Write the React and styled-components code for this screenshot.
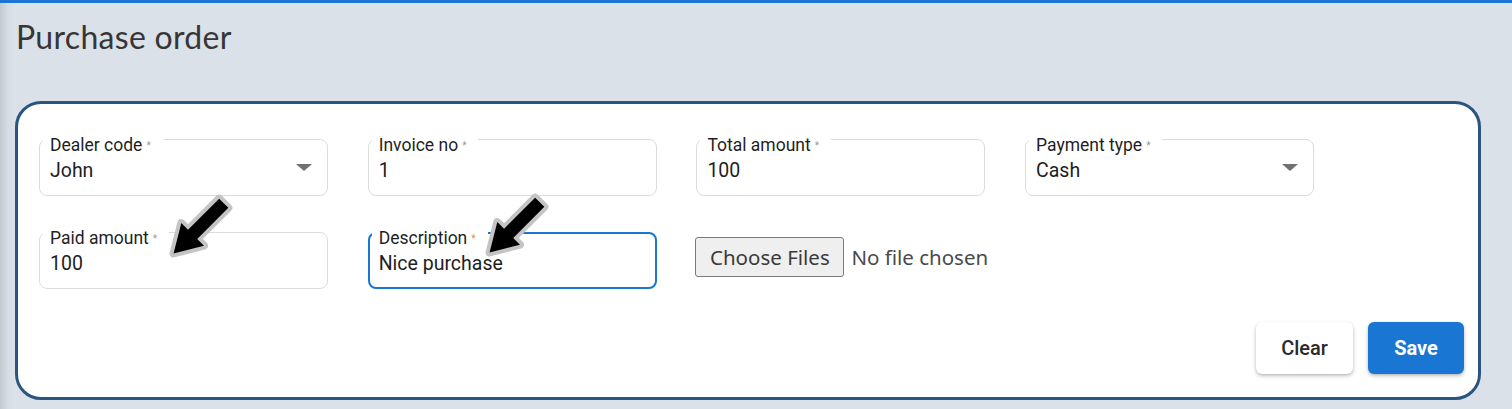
import React from 'react'
import styled, { createGlobalStyle } from 'styled-components'

const GlobalStyle = createGlobalStyle`
  html, body {
    margin: 0;
    padding: 0;
  }

  body {
    background: linear-gradient(to right, #c3c9d1 0px, #d6dce3 8px, #dbe1e8 14px) #dbe1e8;
    font-family: Roboto, "Liberation Sans", sans-serif;
    height: 409px;
    overflow: hidden;
  }
`

const fields = [
  { id: 'dealer', label: 'Dealer code', value: 'John', select: true },
  { id: 'invoice', label: 'Invoice no', value: '1' },
  { id: 'total', label: 'Total amount', value: '100' },
  { id: 'payment', label: 'Payment type', value: 'Cash', select: true },
  { id: 'paid', label: 'Paid amount', value: '100', arrow: { left: 117, top: -47 } },
  { id: 'desc', label: 'Description', value: 'Nice purchase', focused: true, arrow: { left: 103, top: -49 } }
]

const Arrow = ({ left, top }) => (
  <ArrowSvg width="84" height="84" viewBox="0 0 84 84" style={{ left, top }}>
    <g transform="translate(42 42) rotate(135)">
      <polygon
        points="-35,-6.5 9,-6.5 9,-16 36,0 9,16 9,6.5 -35,6.5"
        fill="#000"
        stroke="#c4c4c4"
        strokeWidth="8"
        strokeLinejoin="round"
        paintOrder="stroke"
      />
    </g>
  </ArrowSvg>
)

const App = () => (
  <Page>
    <GlobalStyle />
    <TopBar />
    <Header>
      <Title>Purchase order</Title>
    </Header>
    <Card>
      <Grid>
        {fields.map(field =>
          <Field key={field.id} focused={field.focused}>
            <Label focused={field.focused}>
              {field.label}
              <Required focused={field.focused}>*</Required>
            </Label>
            <Value>{field.value}</Value>
            {field.select && <Caret />}
            {field.arrow && <Arrow {...field.arrow} />}
          </Field>
        )}
        <FilePicker>
          <FileButton>Choose Files</FileButton>
          <FileText>No file chosen</FileText>
        </FilePicker>
      </Grid>
      <Actions>
        <Button>Clear</Button>
        <Button primary>Save</Button>
      </Actions>
    </Card>
  </Page>
)

const Page = styled.div`
  width: 1512px;
  height: 409px;
`

const TopBar = styled.div`
  height: 3px;
  background: #1976d2;
`

const Header = styled.div`
  height: 98px;
  padding-left: 16px;
  box-sizing: border-box;
`

const Title = styled.h1`
  margin: 0;
  padding-top: 13px;
  font-family: Lato, "Noto Sans", sans-serif;
  font-size: 32px;
  font-weight: 400;
  line-height: 42px;
  color: #363636;
  letter-spacing: 0.3px;
`

const Card = styled.div`
  margin-left: 15px;
  width: 1466px;
  height: 299px;
  box-sizing: border-box;
  border: 3px solid #2a5581;
  border-radius: 26px;
  background: #fff;
  padding: 35px 14px 23px 21px;
  display: flex;
  flex-direction: column;
`

const Grid = styled.div`
  display: grid;
  grid-template-columns: repeat(4, 289px);
  column-gap: 39.7px;
  row-gap: 36px;
`

const Field = styled.div`
  position: relative;
  height: 57px;
  box-sizing: border-box;
  border: ${props => props.focused ? '2px solid #1976d2' : '1px solid #dcdcdc'};
  border-radius: 8px;
  padding: ${props => props.focused ? '18px 14px 0 9px' : '19px 15px 0 10px'};
  display: flex;
  justify-content: space-between;
  align-items: flex-start;
`

const Label = styled.span`
  position: absolute;
  left: ${props => props.focused ? '2px' : '3px'};
  top: ${props => props.focused ? '-6px' : '-5px'};
  padding: 0 12px 0 7px;
  background: #fff;
  font-size: 17.5px;
  line-height: 20px;
  color: #1f1f1f;
  white-space: nowrap;
`

const Required = styled.sup`
  margin-left: 4px;
  font-size: 10px;
  vertical-align: 2px;
  color: ${props => props.focused ? '#ee8a3c' : '#9a9a9a'};
`

const Value = styled.div`
  font-size: 19.5px;
  line-height: 23px;
  color: #1e1e1e;
`

const Caret = styled.span`
  margin-top: 5px;
  width: 0;
  height: 0;
  border-left: 8px solid transparent;
  border-right: 8px solid transparent;
  border-top: 7px solid #707070;
`

const ArrowSvg = styled.svg`
  position: absolute;
  pointer-events: none;
`

const FilePicker = styled.div`
  display: flex;
  align-items: center;
  gap: 7px;
  margin-top: -7px;
  margin-left: -1px;
  font-family: "Noto Sans", "Open Sans", sans-serif;
  font-size: 20.5px;
  white-space: nowrap;
`

const FileButton = styled.span`
  flex-shrink: 0;
  width: 149px;
  height: 40px;
  box-sizing: border-box;
  display: flex;
  align-items: center;
  justify-content: center;
  border: 1px solid #7a7a7a;
  border-radius: 3px;
  background: #efefef;
  color: #3a3a3a;
`

const FileText = styled.span`
  color: #4a4a4a;
`

const Actions = styled.div`
  margin-top: auto;
  display: flex;
  justify-content: flex-end;
  gap: 15px;
`

const Button = styled.button`
  width: ${props => props.primary ? '96px' : '97px'};
  height: 52px;
  border: none;
  border-radius: 6px;
  background: ${props => props.primary ? '#1976d2' : '#fff'};
  color: ${props => props.primary ? '#fff' : '#2a2a2a'};
  box-shadow: 0 2px 4px rgba(0, 0, 0, 0.22), 0 1px 2px rgba(0, 0, 0, 0.1);
  font-family: Roboto, "Liberation Sans", sans-serif;
  font-size: 20px;
  font-weight: ${props => props.primary ? 700 : 500};
  cursor: pointer;
`

export default App
